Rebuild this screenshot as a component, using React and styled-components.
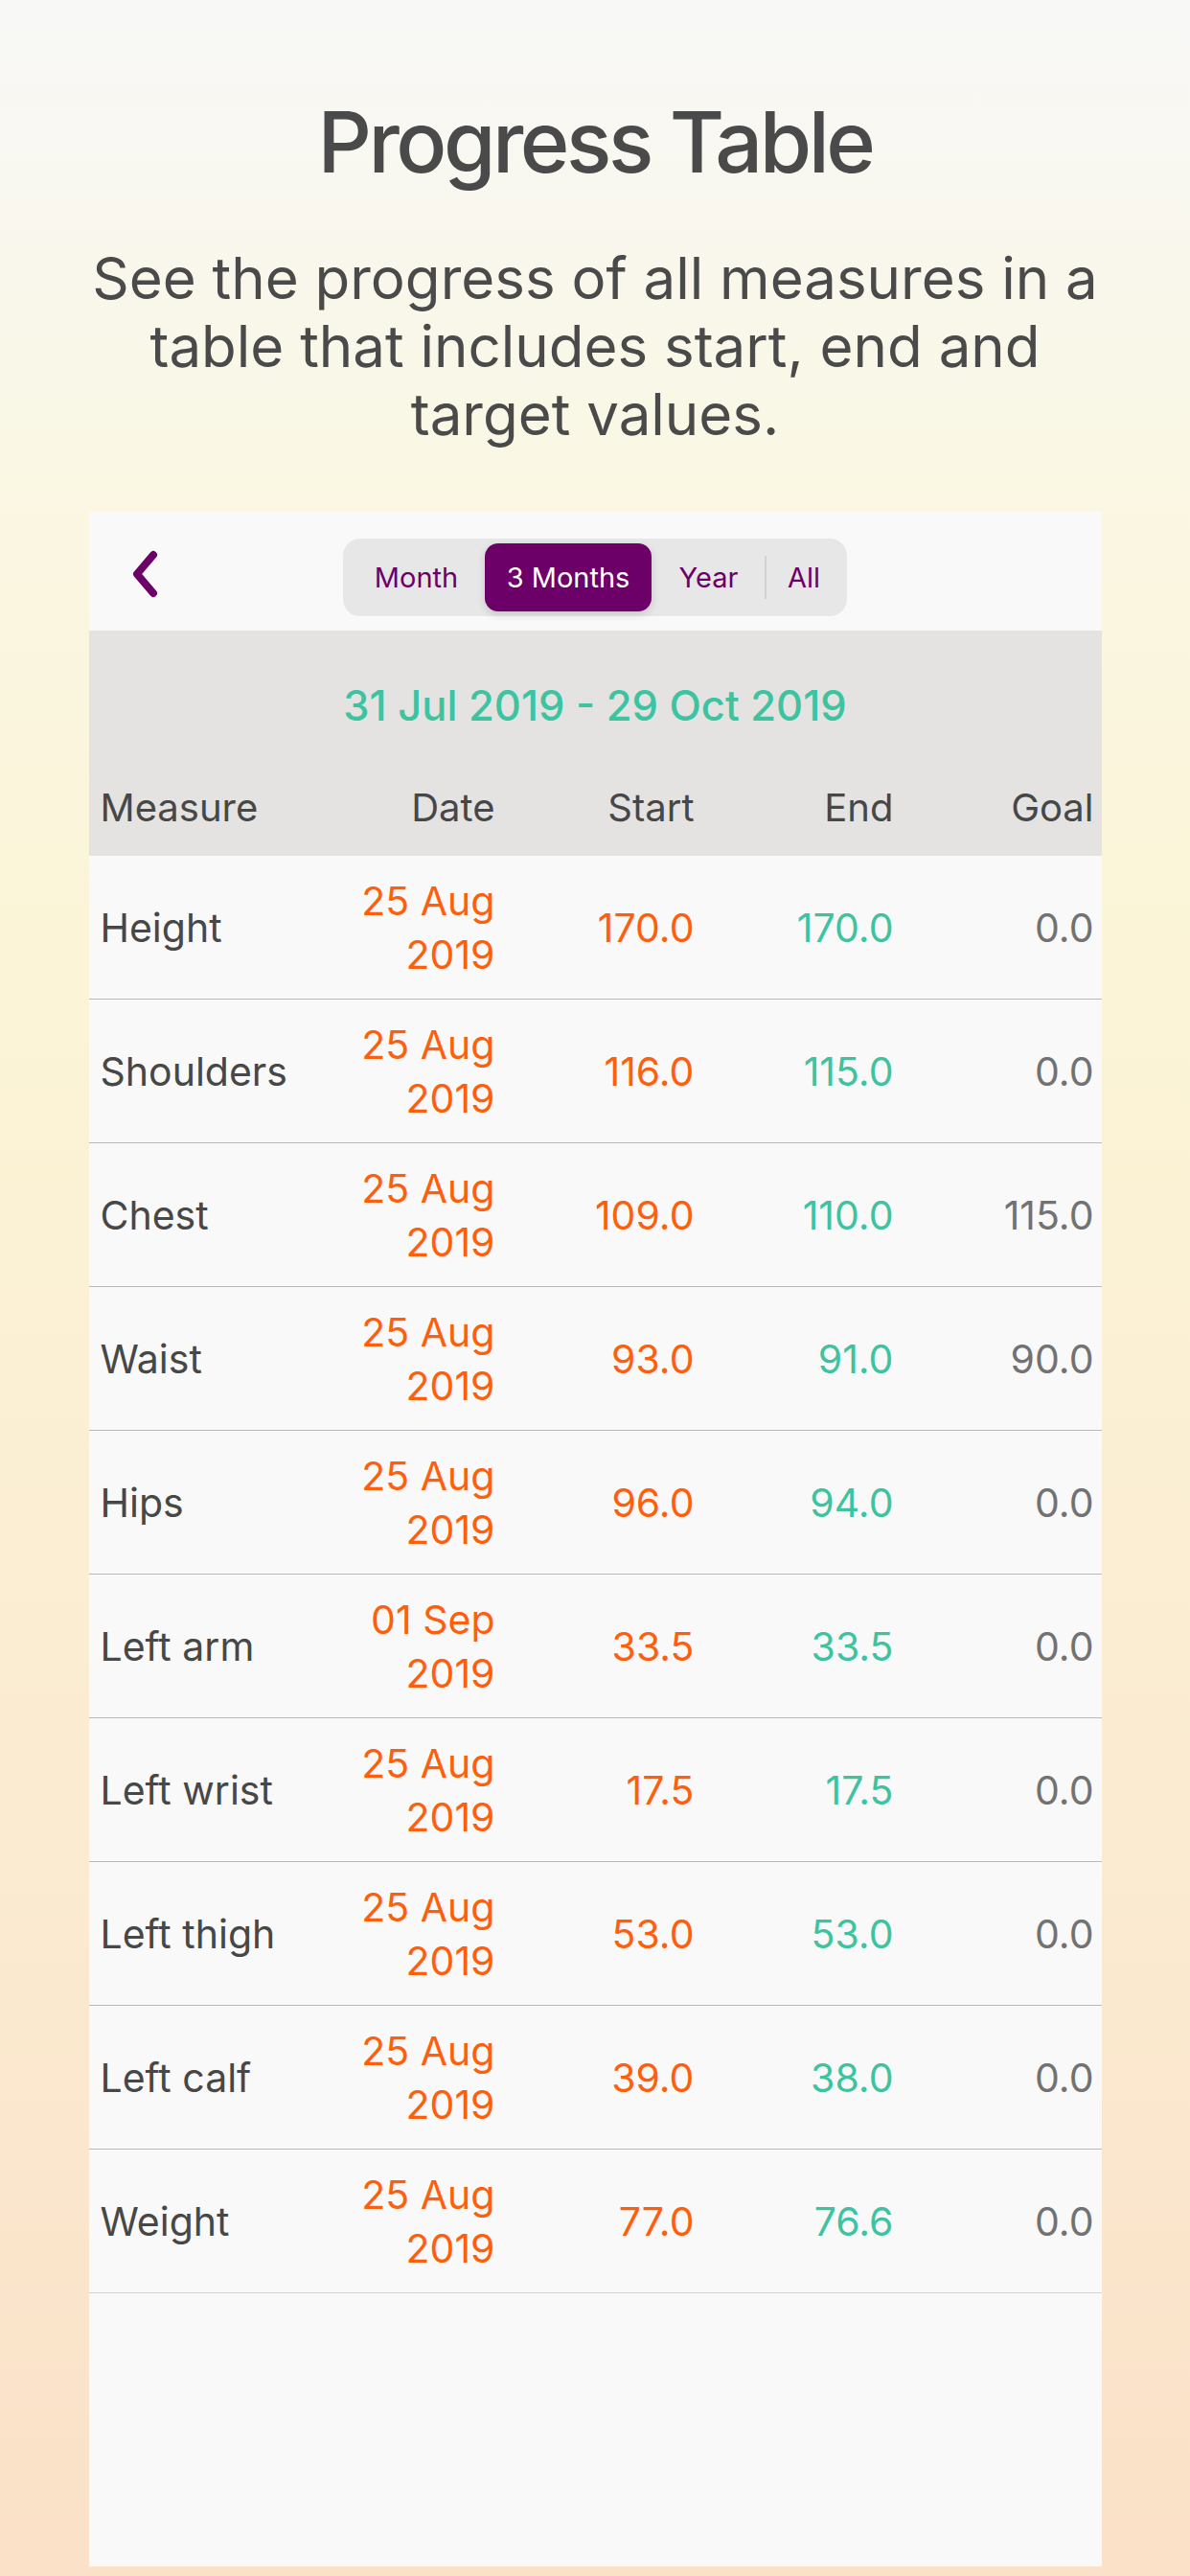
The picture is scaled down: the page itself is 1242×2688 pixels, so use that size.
import styled, { createGlobalStyle } from "styled-components";

const GlobalStyle = createGlobalStyle`
  html, body {
    margin: 0;
    padding: 0;
  }
  body {
    font-family: Inter, "Liberation Sans", sans-serif;
    background: linear-gradient(
      180deg,
      #f8f8f7 0%,
      #faf7e4 18%,
      #fbf4d6 38%,
      #fbedd2 65%,
      #fae1c8 100%
    );
    min-height: 2688px;
  }
`;

const PURPLE = "#6c0068";
const ORANGE = "#ff5f0c";
const TEAL = "#3ec3a1";

const Page = styled.div`
  min-height: 2688px;
  display: flex;
  flex-direction: column;
  align-items: center;
  padding-bottom: 10px;
  box-sizing: border-box;
`;

const Title = styled.h1`
  margin: 104px 0 0;
  font-size: 88px;
  line-height: 1;
  font-weight: 500;
  color: #4a4a4a;
  letter-spacing: -3.5px;
  text-align: center;
`;

const Subtitle = styled.p`
  margin: 63px 0 0;
  width: 1100px;
  font-size: 60px;
  line-height: 71px;
  color: #4a4a4a;
  text-align: center;
`;

const Panel = styled.div`
  margin-top: 65px;
  width: 1057px;
  flex: 1;
  background: #f9f9f9;
  display: flex;
  flex-direction: column;
`;

const Toolbar = styled.div`
  height: 125px;
  box-sizing: border-box;
  padding-top: 14px;
  display: grid;
  grid-template-columns: 1fr auto 1fr;
  align-items: center;
`;

const BackButton = styled.button`
  justify-self: start;
  margin: -8px 0 0 43px;
  padding: 0;
  border: none;
  background: none;
  display: flex;
  cursor: pointer;
`;

const Segmented = styled.div`
  display: flex;
  height: 81px;
  box-sizing: border-box;
  padding: 5px;
  border-radius: 18px;
  background: #e7e7e7;
`;

const Segment = styled.div`
  position: relative;
  width: ${(p) => p.$w}px;
  display: flex;
  align-items: center;
  justify-content: center;
  border-radius: 14px;
  font-size: 29px;
  color: ${(p) => (p.$active ? "#fff" : PURPLE)};
  background: ${(p) => (p.$active ? PURPLE : "transparent")};
  box-shadow: ${(p) => (p.$active ? "0 3px 8px rgba(0,0,0,0.14)" : "none")};

  &::before {
    content: "";
    display: ${(p) => (p.$divider ? "block" : "none")};
    position: absolute;
    left: -1px;
    top: 13px;
    bottom: 13px;
    width: 2px;
    background: #d2d2d2;
  }
`;

const HeaderBlock = styled.div`
  background: #e4e3e1;
  height: 235px;
  display: flex;
  flex-direction: column;
`;

const Range = styled.div`
  margin-top: 53px;
  text-align: center;
  font-size: 43.5px;
  line-height: 50px;
  font-weight: 500;
  color: ${TEAL};
`;

const Grid = styled.div`
  display: grid;
  grid-template-columns: 1fr 208px 208px 208px 209px;
  padding: 0 8px 0 12px;
  align-items: center;
`;

const HeadRow = styled(Grid)`
  margin-top: 58px;
  font-size: 40px;
  line-height: 48px;
  color: #4a4a4a;
`;

const Row = styled(Grid)`
  height: 150px;
  box-sizing: border-box;
  border-bottom: 1px solid ${(p) => (p.$last ? "#d4d4d4" : "#b9b9b9")};
  font-size: 41px;
  line-height: 56px;
`;

const Cell = styled.div`
  text-align: ${(p) => (p.$left ? "left" : "right")};
  color: ${(p) => p.$color || "#474747"};
`;

const DateLine = styled.span`
  display: block;
`;

const Filler = styled.div`
  flex: 1;
`;

const rows = [
  ["Height", "25 Aug", "170.0", "170.0", "0.0"],
  ["Shoulders", "25 Aug", "116.0", "115.0", "0.0"],
  ["Chest", "25 Aug", "109.0", "110.0", "115.0"],
  ["Waist", "25 Aug", "93.0", "91.0", "90.0"],
  ["Hips", "25 Aug", "96.0", "94.0", "0.0"],
  ["Left arm", "01 Sep", "33.5", "33.5", "0.0"],
  ["Left wrist", "25 Aug", "17.5", "17.5", "0.0"],
  ["Left thigh", "25 Aug", "53.0", "53.0", "0.0"],
  ["Left calf", "25 Aug", "39.0", "38.0", "0.0"],
  ["Weight", "25 Aug", "77.0", "76.6", "0.0"],
];

const segments = [
  { label: "Month", w: 143 },
  { label: "3 Months", w: 174, active: true },
  { label: "Year", w: 119 },
  { label: "All", w: 80, divider: true },
];

function Chevron() {
  return (
    <svg width="32" height="50" viewBox="0 0 32 50">
      <path
        d="M24 5 L7 25 L24 45"
        fill="none"
        stroke={PURPLE}
        strokeWidth="8"
        strokeLinecap="round"
        strokeLinejoin="round"
      />
    </svg>
  );
}

export default function App() {
  return (
    <>
      <GlobalStyle />
      <Page>
        <Title>Progress Table</Title>
        <Subtitle>
          See the progress of all measures in a table that includes start, end
          and target values.
        </Subtitle>

        <Panel>
          <Toolbar>
            <BackButton aria-label="back">
              <Chevron />
            </BackButton>
            <Segmented>
              {segments.map((s) => (
                <Segment
                  key={s.label}
                  $w={s.w}
                  $active={s.active}
                  $divider={s.divider}
                >
                  {s.label}
                </Segment>
              ))}
            </Segmented>
            <div />
          </Toolbar>

          <HeaderBlock>
            <Range>31 Jul 2019 - 29 Oct 2019</Range>
            <HeadRow>
              <Cell $left>Measure</Cell>
              <Cell>Date</Cell>
              <Cell>Start</Cell>
              <Cell>End</Cell>
              <Cell>Goal</Cell>
            </HeadRow>
          </HeaderBlock>

          {rows.map(([name, date, start, end, goal], i) => (
            <Row key={name} $last={i === rows.length - 1}>
              <Cell $left>{name}</Cell>
              <Cell $color={ORANGE}>
                <DateLine>{date}</DateLine>
                <DateLine>2019</DateLine>
              </Cell>
              <Cell $color={ORANGE}>{start}</Cell>
              <Cell $color={TEAL}>{end}</Cell>
              <Cell $color="#727272">{goal}</Cell>
            </Row>
          ))}
          <Filler />
        </Panel>
      </Page>
    </>
  );
}
